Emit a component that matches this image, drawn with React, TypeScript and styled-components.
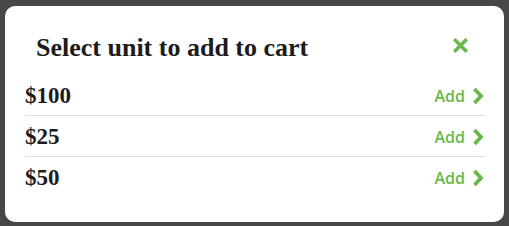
import styled, { createGlobalStyle } from "styled-components";

const GlobalStyle = createGlobalStyle`
  html, body {
    margin: 0;
    padding: 0;
    background: #474747;
  }
  body {
    font-family: "Liberation Serif", serif;
  }
`;

const units = ["$100", "$25", "$50"];

function CloseIcon() {
  return (
    <svg width="15" height="15" viewBox="0 0 15 15" aria-hidden="true">
      <path
        d="M2.5 2.5 L12.5 12.5 M12.5 2.5 L2.5 12.5"
        stroke="currentColor"
        strokeWidth="3.6"
        strokeLinecap="square"
        fill="none"
      />
    </svg>
  );
}

function ChevronIcon() {
  return (
    <svg width="12" height="18" viewBox="0 0 12 18" aria-hidden="true">
      <path
        d="M2.5 2 L9 9 L2.5 16"
        stroke="currentColor"
        strokeWidth="3.8"
        strokeLinecap="butt"
        strokeLinejoin="miter"
        fill="none"
      />
    </svg>
  );
}

export default function App() {
  return (
    <>
      <GlobalStyle />
      <Backdrop>
        <Modal role="dialog" aria-label="Select unit to add to cart">
          <Header>
            <Title>Select unit to add to cart</Title>
            <CloseButton aria-label="Close">
              <CloseIcon />
            </CloseButton>
          </Header>
          <List>
            {units.map((unit) => (
              <Row key={unit}>
                <Amount>{unit}</Amount>
                <AddButton>
                  Add
                  <ChevronIcon />
                </AddButton>
              </Row>
            ))}
          </List>
        </Modal>
      </Backdrop>
    </>
  );
}

const Backdrop = styled.div`
  width: 509px;
  height: 226px;
  padding: 6px 5px 4px 5px;
  box-sizing: border-box;
`;

const Modal = styled.div`
  background: #fff;
  border-radius: 10px;
  height: 216px;
  box-sizing: border-box;
  padding: 27px 19px 0 20px;
`;

const Header = styled.div`
  display: flex;
  align-items: center;
  justify-content: space-between;
  padding: 0 17px 0 11px;
  height: 30px;
`;

const Title = styled.h2`
  margin: 0;
  font-family: "Liberation Serif", serif;
  font-weight: 700;
  font-size: 26px;
  line-height: 30px;
  color: #1c1c1c;
`;

const CloseButton = styled.button`
  border: 0;
  background: none;
  padding: 0;
  margin-bottom: 5px;
  display: flex;
  color: #6ab84a;
  cursor: pointer;
`;

const List = styled.div`
  margin-top: 12px;
  display: flex;
  flex-direction: column;
`;

const Row = styled.div`
  display: flex;
  align-items: center;
  justify-content: space-between;
  height: 41px;
  box-sizing: border-box;
  border-bottom: 1px solid #dedede;
  padding-top: 1px;

  &:last-child {
    border-bottom: 0;
  }
`;

const Amount = styled.span`
  font-family: "Liberation Serif", serif;
  font-weight: 700;
  font-size: 23px;
  color: #1c1c1c;
`;

const AddButton = styled.button`
  border: 0;
  background: none;
  padding: 0 1px 0 0;
  display: flex;
  align-items: center;
  gap: 7px;
  font-family: "Open Sans", sans-serif;
  font-weight: 600;
  font-size: 16px;
  color: #6ab84a;
  cursor: pointer;
`;
